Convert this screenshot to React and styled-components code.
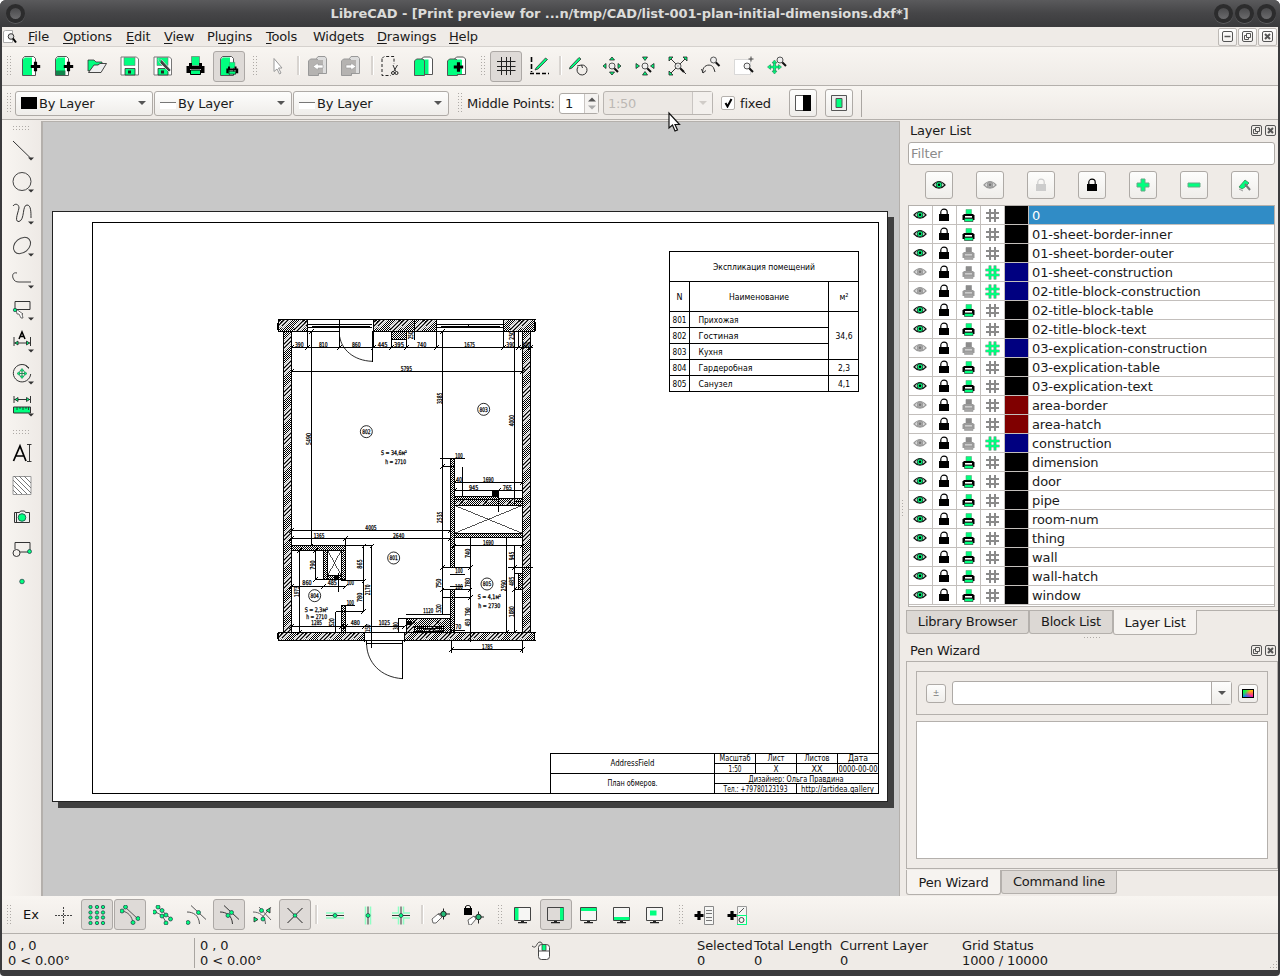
import React from 'react';
import styled, { createGlobalStyle, css } from 'styled-components';

const G = '#00ff7f';
const LINE = '#b4b0ac';

const Global = createGlobalStyle`
  * { box-sizing: border-box; }
  body { margin: 0; background: #fff; font: 13px/15px "DejaVu Sans", sans-serif; color: #1a1a1a; overflow: hidden; }
  svg { display: block; }
`;

/* ---------- window frame ---------- */
const Window = styled.div`
  width: 1280px; height: 976px; display: flex; flex-direction: column; position: relative;
  background: #3b3b3d; border-radius: 6px 6px 4px 4px; overflow: hidden;
`;
const TitleBar = styled.header`
  height: 27px; flex: none; display: flex; align-items: center; padding: 0 2px 0 6px;
  background: linear-gradient(#5a5a5c, #454547 50%, #3a3a3c); color: #dcdcda;
  font-weight: bold; font-size: 13px;
`;
const TitleText = styled.div`
  flex: 1; text-align: center; padding-left: 0; margin-left: -2px; white-space: nowrap; letter-spacing: -0.08px;
`;
const Orb = styled.i`
  width: 19px; height: 19px; margin-right: 2.500px; border-radius: 50%; border: 4px solid #2c2c2d;
  background: linear-gradient(#4a4a4c, #6b6b6d); box-shadow: 0 1px 0 #5d5d5f;
`;
const Client = styled.div`
  flex: none; height: 943px; margin: 0 2px; display: flex; flex-direction: column; background: #efebe7;
`;
const MenuBar = styled.nav`
  height: 20px; flex: none; display: flex; align-items: center; border-bottom: 1px solid #d5d1cd; padding-left: 1px;
`;
const MenuItem = styled.span`
  width: ${p => p.$w}px; letter-spacing: -0.2px; white-space: nowrap;
  u { text-underline-offset: 2px; text-decoration-thickness: 1px; }
`;
const MdiIcon = styled.span` width: 25px; `;
const MdiButtons = styled.div` margin-left: auto; display: flex; gap: 1px; padding-right: 1px; `;
const MdiButton = styled.button`
  width: 19px; height: 18px; padding: 0; border: 1px solid #bdb9b5; border-radius: 2px;
  background: linear-gradient(#fff, #f0edea); display: grid; place-items: center;
`;

/* ---------- toolbars ---------- */
const ToolBar = styled.div`
  height: ${p => p.$h}px; flex: none; display: flex; align-items: center; padding-top: ${p => p.$pt || 0}px;
  background: linear-gradient(#f8f5f1, #eeeae6); border-bottom: 1px solid ${LINE}; overflow: hidden;
`;
const dots = css`
  background-image: radial-gradient(circle at 0.5px 0.5px, #aeaaa6 0.6px, transparent 0.9px);
  background-size: 3px 3px;
`;
const Handle = styled.i`
  flex: none; width: ${p => p.$w || 15}px; height: 20px; padding-left: 7px; margin-left: ${p => (p.$first ? -2 : 0)}px;
  &::before { content: ""; display: block; width: 5px; height: 20px; ${dots} }
`;
const Sep = styled.i`
  flex: none; width: ${p => p.$w || 7}px; height: 20px; padding-left: 3px;
  &::before { content: ""; display: block; width: 2px; height: 19px; background: #d8d4d0; border-right: 1px solid #fff; }
`;
const ToolButton = styled.button`
  flex: none; width: 32px; height: 31px; margin: 0 1px 0 0; padding: 0; display: grid; place-items: center;
  border: 1px solid ${p => (p.$on ? '#aca8a5' : 'transparent')}; border-radius: 3px;
  background: ${p => (p.$on ? '#dedad7' : 'none')}; font: inherit; color: #111;
`;
const Combo = styled.div`
  width: ${p => p.$w}px; height: 25px; flex: none; margin-right: ${p => p.$mr ?? 1}px; display: flex; align-items: center;
  border: 1px solid #aeaaa6; border-radius: 3px; padding: 0 6px 0 5px; gap: 2px; letter-spacing: -0.2px;
  background: linear-gradient(#fdfdfc, #efedea);
`;
const Swatch = styled.i` width: 16px; height: 12px; background: #000; `;
const LineSample = styled.i`
  width: 16px; height: 12px; background: linear-gradient(#fff0 5px, #777 5px, #777 6px, #fff 6px);
`;
const Caret = styled.i`
  margin-left: auto; border: 4px solid transparent; border-top-color: ${p => p.$c || '#555'}; border-bottom: 0;
`;
const Label = styled.span` white-space: nowrap; letter-spacing: -0.2px; width: ${p => p.$w}px; flex: none; `;
const Spin = styled.div`
  width: 40px; height: 21px; flex: none; border: 1px solid #aeaaa6; border-radius: 3px; background: #fff; display: flex;
  align-items: center; padding-left: 5px; margin-right: 4px;
`;
const SpinArrows = styled.div`
  margin-left: auto; width: 14px; height: 19px; background: #f5f3f1; border-left: 1px solid #c9c5c2;
  display: grid; place-items: center;
`;
const ScaleBox = styled.div`
  width: 110px; height: 24px; flex: none; border: 1px solid #b9b5b1; border-radius: 3px; display: flex; align-items: center;
  color: #bcb8b4; padding: 0 0 0 4px; margin-right: 8px; background: #ece8e4; letter-spacing: -0.3px;
`;
const ScaleDrop = styled.div`
  margin-left: auto; width: 20px; height: 22px; border-left: 1px solid #c9c5c2; display: flex; align-items: center;
  justify-content: center; background: #f3f0ed;
  i { margin: 0; }
`;
const Check = styled.span`
  width: 14px; height: 14px; flex: none; border: 1px solid #b5b1ad; border-radius: 2px; background: #fff;
  display: grid; place-items: center; margin-right: 5px;
`;
const FramedButton = styled.button`
  width: 28px; height: 28px; flex: none; padding: 0; margin: 0 ${p => p.$mr || 0}px 0 0; border: 1px solid #aeaaa6; border-radius: 3px;
  background: linear-gradient(#fdfdfc, #efedea); display: grid; place-items: center;
`;
const EndRule = styled.i` width: 1px; height: 27px; background: #aaa6a2; `;

/* ---------- middle area ---------- */
const Middle = styled.div` height: 776px; flex: none; display: flex; `;
const SideBar = styled.div`
  width: 39px; display: flex; flex-direction: column; align-items: center;
  background: linear-gradient(90deg, #f8f5f1, #eeeae6);
`;
const SideHandle = styled.i`
  width: 17px; height: ${p => p.$h}px; padding-top: ${p => p.$t}px;
  &::before { content: ""; display: block; height: 5px; ${dots} }
`;
const SideButton = styled.button`
  width: 36px; height: 32px; flex: none; border: 0; padding: 0; background: none; display: grid; place-items: center;
`;
const Canvas = styled.main`
  width: 859px; height: 775px; margin-top: 1px; background: #c8c8c8; border: solid ${LINE}; border-width: 1px 1px 0 2px;
`;
const Splitter = styled.div`
  width: 6px; display: flex; align-items: center; padding-left: 2px;
  &::before { content: ""; width: 2px; height: 17px; ${dots} }
`;
const Dock = styled.aside` width: 372px; display: flex; flex-direction: column; `;
const DockTitle = styled.div`
  height: ${p => p.$h}px; flex: none; display: flex; align-items: center; gap: 3px; padding: ${p => p.$pt || 0}px 2px ${p => p.$pb || 0}px 4px;
  letter-spacing: -0.2px;
  span { flex: 1; }
`;
const Filter = styled.div`
  height: 23px; flex: none; margin: 0 3px 0 2px; border: 1px solid #aeaaa6; border-radius: 3px; background: #fff;
  color: #8b8b8b; padding: 3px 2px; letter-spacing: -0.1px;
`;
const LayerActions = styled.div` display: flex; gap: 23px; padding: 6px 0 6px 19px; height: 40px; flex: none; `;
const LayerTable = styled.div`
  height: 402px; flex: none; margin: 0 3px 0 2px; border: 1px solid ${LINE}; background: #fff;
`;
const LayerRow = styled.div` height: 19px; display: grid; grid-template-columns: 24px 24px 24px 24px 24px 1fr; `;
const Cell = styled.div`
  display: grid; place-items: center; padding-right: ${p => p.$nudge || 0}px;
  border: solid #c3bfbc; border-width: 0 1px 1px 0; background: ${p => p.$bg || '#fff'};
`;
const Name = styled.div`
  border-bottom: 1px solid #c3bfbc; padding: 2px 0 0 3px; background: ${p => (p.$sel ? '#308cc6' : '#fff')};
  color: ${p => (p.$sel ? '#fff' : '#1a1a1a')}; letter-spacing: -0.1px;
`;
const Tabs = styled.div` display: flex; align-items: flex-start; border-top: 1px solid ${LINE}; height: ${p => p.$h}px; flex: none; margin-top: ${p => p.$mt}px; `;
const Tab = styled.div`
  width: ${p => p.$w}px; height: ${p => (p.$on ? 25 : 23)}px; border: 1px solid ${LINE}; border-top: 0; border-radius: 0 0 3px 3px;
  text-align: center; padding-top: ${p => (p.$on ? 5 : 3)}px; background: ${p => (p.$on ? '#f6f3f0' : '#dcd8d4')};
  margin-top: ${p => (p.$on ? -1 : 0)}px; letter-spacing: -0.2px; white-space: nowrap;
`;
const HGrip = styled.i` align-self: center; width: 17px; height: 2px; flex: none; ${dots} `;
const WizardPanel = styled.div`
  height: 208px; flex: none; border: 1px solid ${LINE}; padding: 9px; display: flex; flex-direction: column; gap: 6px;
`;
const WizardTop = styled.div` height: 44px; border: 1px solid ${LINE}; display: flex; align-items: center; padding: 0 9px; gap: 6px; `;
const SmallButton = styled.button`
  width: 20px; height: 19px; padding: 0; border: 1px solid #aeaaa6; border-radius: 3px; background: linear-gradient(#fdfdfc, #efedea);
  display: grid; place-items: center; font: 8px "DejaVu Sans", sans-serif; color: #777;
`;
const ColorCombo = styled.div`
  flex: 1; height: 24px; border: 1px solid #aeaaa6; border-radius: 3px; background: #fff; display: flex; justify-content: flex-end;
  div { width: 20px; border-left: 1px solid #aeaaa6; background: linear-gradient(#fdfdfc, #efedea); display: grid; place-items: center; }
  div i { margin: 0; }
`;
const Spectrum = styled.i`
  width: 12px; height: 9px; border: 1px solid #000;
  background: linear-gradient(135deg, #0f4 15%, transparent 50%), linear-gradient(45deg, #08f 10%, transparent 60%), linear-gradient(#fc0, #f0a);
`;
const WhiteBox = styled.div` flex: 1; border: 1px solid ${LINE}; background: #fff; `;
const Status = styled.footer`
  height: 36px; flex: none; display: flex; padding: 4px 0 0 6px; letter-spacing: -0.1px;
`;
const StatusCell = styled.div`
  width: ${p => p.$w}px; white-space: pre; flex: none; margin-left: ${p => p.$ml || 0}px;
`;
const StatusRule = styled.i` width: 1px; height: 30px; background: #a9a5a1; margin-right: 5px; `;
const Grip = styled.i`
  margin: 20px 0 0 auto; width: 11px; height: 11px; ${dots} clip-path: polygon(100% 0, 100% 100%, 0 100%);
`;
const Pointer = styled.svg` position: absolute; left: 667px; top: 111px; `;

/* ---------- icons ---------- */
const Dot = ({ x, y, r = 1.7 }) => <circle cx={x} cy={y} r={r} fill={G} stroke="#234" strokeWidth=".7" />;
const Lens = ({ x, y }) => (
  <g transform={`translate(${x} ${y})`}>
    <path d="M2.200 2.200L6 6" stroke="#111" strokeWidth="2" /><circle r="3" fill="#eee" fillOpacity=".8" stroke="#444" strokeWidth=".9" />
  </g>
);
const Plus = ({ x, y, s = 4.7 }) => <path d={`M${x - s} ${y}h${2 * s}M${x} ${y - s}v${2 * s}`} stroke="#000" strokeWidth="3.200" />;
const Printer = () => (
  <>
    <path d="M5.500 .5h8v9h-8z" fill={G} stroke="#666" strokeWidth=".6" />
    <path d="M3 7h3v3h7V7h3v3h2.500v7H15v-4H4v4H.500v-7H3z" fill="#000" />
    <path d="M4.500 14h10v4.500h-10z" fill={G} stroke="#000" />
  </>
);
const Floppy = () => (
  <>
    <path d="M1 1h15.500L18.500 3v16H1z" fill="#fff" stroke="#777" /><path d="M4 1.500h11v8H4z" fill={G} stroke="#777" strokeWidth=".6" />
    <path d="M5 12.500h10V19H5z" fill={G} stroke="#333" strokeWidth=".8" /><path d="M8 14.500h3v3H8z" fill="#222" />
  </>
);
const Docs = () => (
  <>
    <path d="M7.500 3l2-2h7l2 2v15.500h-11z" fill="#fff" stroke="#555" /><path d="M9 3.500h5.500V18H9z" fill={G} />
    <path d="M.500 5l2-2h6.500l1.500 2v14.500H.500z" fill={G} stroke="#555" />
  </>
);
const Monitor = ({ children }) => (
  <>
    <path d="M1.500 2.500h16v13h-16z" fill="#f6f6f4" stroke="#444" />{children}
    <path d="M8 16h3v2H8zM5 17h9v1.200H5z" fill="#222" />
  </>
);
const Doc = () => (
  <>
    <path d="M1.500 3L3.500 .5h9l2 2v17h-13z" fill="#fff" stroke="#555" /><path d="M2 3.500L4 1.500h7V19H2z" fill={G} />
  </>
);
const Pencil = () => <path d="M7 12l9.500-10L18.500 3.500 9 13l-3 1z" fill={G} stroke="#333" strokeWidth=".8" />;
const Tri = ({ d }) => <path d={d} fill={G} stroke="#222" strokeWidth=".8" />;
const Cross4 = ({ x, y, s = 6 }) => (
  <g transform={`translate(${x} ${y})`}>
    <path d={`M${-s} 0H${s}M0 ${-s}V${s}`} stroke="#285" strokeWidth="2.600" /><path d={`M${-s} 0H${s}M0 ${-s}V${s}`} stroke={G} strokeWidth="1.400" />
    <path d={`M${-s - 2} 0l3-2.500v5zM${s + 2} 0l-3-2.500v5zM0 ${-s - 2}l-2.500 3h5zM0 ${s + 2}l-2.500-3h5z`} fill={G} stroke="#285" strokeWidth=".6" />
  </g>
);
const Sheets = ({ back }) => (
  <g stroke="#999">
    <path d="M8.500 2.500l1.500-2h7l1.500 2v15h-10z" fill="#ddd" /><path d="M.500 5l2-2h6.500l1.500 2v14.500H.500z" fill="#b5b3b1" /><path d="M8 4h7v13H8z" fill="#b5b3b1" stroke="none" />
    <path d={back ? 'M5 10.500l5-3.500v2h5v3h-5v2z' : 'M15 10.500L10 7v2H5v3h5v2z'} fill="#fff" stroke="#999" strokeWidth=".6" />
  </g>
);
const curves = 'M5 .5l15 14M1 7c6 0 12 3 12.500 12';
const icons = {
  new: <><Doc /><Plus x={14.500} y={10.500} /></>,
  newTpl: <><Doc /><path d="M2 14.500h9.500V19H2z" fill="#175c3a" opacity=".75" /><Plus x={14.500} y={10.500} /></>,
  open: <><path d="M1 15V4h6l2 2h6v4z" fill={G} stroke="#333" strokeWidth=".8" /><path d="M1.500 16.500L7 9h4l2-1.500h6.500L14 16.500z" fill="#eee" stroke="#333" strokeWidth=".9" /></>,
  save: <Floppy />,
  saveAs: <><Floppy /><path d="M5 3l4 1 9 10-2 2L7 7z" fill="#444" stroke="#eee" strokeWidth=".7" /><path d="M5 3l3 .5L7.500 7z" fill={G} /></>,
  print: <Printer />,
  preview: <><Doc /><g transform="translate(7 6) scale(.66)"><Printer /></g></>,
  cursor: <path d="M7 2.500v13l3-2.500 2.500 5 1.500-1-2.500-5H15z" fill="#fff" stroke="#999" />,
  undo: <Sheets back />, redo: <Sheets />,
  cut: <><path d="M1 2.500L3 .5h10V8M1 3v16.500h9" fill="none" stroke="#222" strokeDasharray="3 2" /><path d="M12 9l2.500 6M16.500 9l-3.500 6" stroke="#333" fill="none" /><circle cx="12" cy="17" r="1.500" fill="none" stroke="#222" /><circle cx="15.500" cy="17" r="1.500" fill="none" stroke="#222" /></>,
  copy: <Docs />,
  paste: <><Docs /><path d="M8 4h7v14H8z" fill={G} /><Plus x={11.500} y={11} /></>,
  grid: <path d="M5.500 1v18M10.500 1v18M14.500 1v18M1 5.500h18.500M1 10.500h18.500M1 14.500h18.500" stroke="#222" />,
  draft: <><path d="M2.500 1v15" stroke="#000" strokeWidth="1.600" strokeDasharray="5 2" /><path d="M1 17.500h19" stroke="#000" strokeWidth="1.500" strokeDasharray="4 2" /><Pencil /></>,
  redraw: <><path d="M1 11L10 1.500l2 1.500-9 9-2.500 1z" fill={G} stroke="#333" strokeWidth=".8" /><path d="M9 11a5 5 0 1 0 3.500-2L8 10m4.500-1l1 3" fill="none" stroke="#333" /></>,
  zoomIn: <><Tri d="M10 1l2.500 3h-5zM10 19l2.500-3h-5zM1 10l3-2.500v5zM19 10l-3-2.500v5z" /><Lens x={10} y={10} /></>,
  zoomOut: <><Tri d="M10 4.500L7.500 1h5zM10 15.500l2.500 3.500h-5zM4.500 10L1 7.500v5zM15.500 10l3.500-2.500v5z" /><Lens x={10} y={10} /></>,
  zoomAuto: <><path d="M2 2l16 16M18 2L2 18" stroke="#333" /><Tri d="M1 1h4L1 5zM19 1v4l-4-4zM1 19v-4l4 4z" /><Lens x={10} y={10} /></>,
  zoomPrev: <><path d="M2 17C0 9 11 6 13 13l1 3M2 17l-1.500-4M2 17l3-2.500" fill="none" stroke="#333" /><Lens x={12.500} y={4} /></>,
  zoomWin: <><path d="M.500 3.500h16v15H.500z" fill="#fff" stroke="#ccc" strokeWidth=".7" /><path d="M14.500 3h5M17 .5v5" stroke="#444" /><Lens x={13} y={10} /></>,
  zoomPan: <><Cross4 x={7.500} y={11} s={5} /><Lens x={13} y={4} /></>,
  line: <path d="M1 2l17.500 17" stroke="#333" />,
  circle: <circle cx="10" cy="10.500" r="9" fill="none" stroke="#444" />,
  spline: <path d="M1 3c2-3 6-2 6 2-1 5-5 14 0 13.500C13 17 10 2 15 2c4 0 4 7 4 13" fill="none" stroke="#333" />,
  ellipse: <ellipse cx="10" cy="10.500" rx="9.500" ry="7" transform="rotate(-40 10 10.500)" fill="none" stroke="#444" />,
  polyline: <path d="M5 6C1 5 0 8 1 11s3 4 6 4h12" fill="none" stroke="#444" />,
  select: <><path d="M3 2.500h15v8H3z" fill="none" stroke="#333" /><path d="M4 10l1 5 2 0 2 4 2 0-1-4h1z" fill="#fff" stroke="#333" strokeWidth=".7" /><Dot x={3} y={11} /></>,
  dim: <><path d="M2 6v9M18.500 6v9M2 12h16" stroke="#333" fill="none" /><path d="M7 8L10 1l3 7M8 5.500h4" fill="none" stroke="#000" strokeWidth="1.500" /><Tri d="M3 12l3-2v4zM17.500 12l-3-2v4z" /></>,
  modify: <><path d="M17 5A8.700 8.700 0 1 0 18.700 11M13.500 2.500l3.500 3" fill="none" stroke="#333" /><path d="M6 10.500h8M10 6.500v8" stroke="#285" strokeWidth="1" /><path d="M5 10.500l2.500-2v4zM15 10.500l-2.500-2v4zM10 5.500l-2 2.500h4zM10 15.500l-2-2.500h4z" fill={G} stroke="#285" strokeWidth=".7" /></>,
  measure: <><path d="M2 1v7M18.500 1v7M2 4.500h16" stroke="#333" /><Tri d="M3 4.500l3-2v4zM17.500 4.500l-3-2v4z" /><path d="M1.500 12h17v6h-17z" fill={G} stroke="#333" /><path d="M5 12v3M8 12v2M11 12v3M14 12v2M16.500 12v3" stroke="#222" strokeWidth=".8" /></>,
  text: <><path d="M1.500 18L8 3l6 15M3.500 13h8.500" fill="none" stroke="#000" strokeWidth="1.700" /><path d="M15 1.500h4.500M17.500 1.500v17M15 18.500h4.500" stroke="#222" strokeWidth=".9" /></>,
  hatch: <><path d="M1 1.500h18v18H1z" fill="#fff" stroke="#999" /><path d="M1 15l4 4M1 10l9 9M1 5l14 14M2 1l17 17M7 1l12 12M12 1l7 7" stroke="#777" /></>,
  camera: <><path d="M2.500 5.500h5l1-1.500h4l1 1.500h4v10h-15zM4.500 6v10" fill="#eee" stroke="#333" /><circle cx="10" cy="10.500" r="3.800" fill={G} stroke="#265" /></>,
  block: <><path d="M3 10V3.500h15V13H8" fill="none" stroke="#333" /><circle cx="4.500" cy="14" r="3.500" fill="none" stroke="#333" /><Dot x={17.500} y={12.500} r={2} /></>,
  point: <Dot x={10} y={10.500} r={2.300} />,
  free: <path d="M1 10.500h17M9.500 2v17" stroke="#444" strokeDasharray="2 1" />,
  snapGrid: [3.500, 10, 16].flatMap(x => [2, 7.500, 12.500, 18].map(y => <Dot key={x + '-' + y} x={x} y={y} />)),
  snapEnd: <><path d="M5 2l13 12M2 6c6 1 10 5 11 12" fill="none" stroke="#555" /><Dot x={5.500} y={2} r={2} /><Dot x={2} y={6} r={2} /><Dot x={18} y={13.500} r={2} /><Dot x={13} y={17.500} r={2} /></>,
  snapOn: <><path d="M5 2l13 12M1 7c6 1 10 5 12 11" fill="none" stroke="#555" />{[[5, 2], [1.500, 7], [9, 5.500], [9, 11], [13, 10], [17.500, 14], [13, 18]].map(([a, b]) => <Dot key={a + '-' + b} x={a} y={b} r={2} />)}</>,
  snapCenter: <><path d={curves} fill="none" stroke="#555" /><Dot x={12.500} y={7.500} r={2} /><Dot x={2} y={17.500} r={2} /></>,
  snapMid: <><path d={curves} fill="none" stroke="#333" /><Dot x={12.500} y={7.500} r={2} /><Dot x={9} y={10.500} r={2} /></>,
  snapDist: <><path d="M7 2l12 13M1 7c6 0 12 3 12.500 12M19 2L9 14" fill="none" stroke="#666" /><Dot x={9.500} y={5.500} r={2} /><Dot x={11} y={14} r={2} /><Tri d="M14 5.500l4-2.500v5zM2 12l4 2.500-4 2.500z" /></>,
  snapInt: <><path d="M2.500 3l15 15M17.500 3l-15 15" stroke="#222" /><Dot x={10} y={10.500} r={1.800} /></>,
  resH: <><path d="M1 8h18M1 13h18" stroke="#8fffc4" strokeWidth="1.500" /><path d="M1 10.500h18" stroke="#333" /><Dot x={10} y={10.500} r={2} /></>,
  resV: <><path d="M7.500 1.500v18M12.500 1.500v18" stroke="#8fffc4" strokeWidth="1.500" /><path d="M10 1.500v18" stroke="#333" /><Dot x={10} y={10.500} r={2} /></>,
  resO: <><path d="M1 8h6.500V1.500M12.500 1.500V8H19M1 13h6.500v6.500M12.500 19.500V13H19" stroke="#8fffc4" strokeWidth="1.500" fill="none" /><path d="M1 10.500h18M10 1.500v18" stroke="#333" /><Dot x={10} y={10.500} r={2} /></>,
  relZero: <><path d="M7 9h12M12.500 3.500v11" stroke="#222" /><circle cx="12.500" cy="9" r="2.700" fill="#2b7" stroke="#222" /><path d="M1 14l6-5 4 3-6 6H2z" fill="#fff" stroke="#444" strokeWidth=".8" /></>,
  lockZero: <><path d="M0 3h8v7H0z" fill="#000" /><path d="M1.500 3V1.500q2.500-3 5 0V3" fill="none" stroke="#000" /><path d="M9 12h11M14.500 6.500v12" stroke="#222" /><circle cx="14.500" cy="12" r="2.700" fill="#2b7" stroke="#222" /><path d="M4 15l6-4 2 3-5 6H5z" fill="#fff" stroke="#444" strokeWidth=".8" /></>,
  dockL: <Monitor><path d="M2 3h3.500v12H2z" fill={G} /></Monitor>,
  dockR: <Monitor><path d="M2 3h12v12H2z" fill="#dedad7" /><path d="M14 3h3.500v12H14z" fill={G} /></Monitor>,
  dockT: <Monitor><path d="M2 3h15.500v3H2z" fill={G} /></Monitor>,
  dockB: <Monitor><path d="M2 12h15.500v3H2z" fill={G} /></Monitor>,
  dockF: <Monitor><path d="M5 5.500h6.500v5H5z" fill={G} /></Monitor>,
  addCmd: <><path d="M10.500 1.500h9v18h-9z" fill="#f6f6f4" stroke="#888" /><path d="M12 5.500h6M12 8.500h6M12 12.500h6M12 15.500h6" stroke="#555" strokeWidth=".8" /><Plus x={5} y={10.500} s={4.500} /></>,
  addTool: <><path d="M10.500 1.500h9v18h-9z" fill="#f6f6f4" stroke="#999" /><path d="M10 10.500h9.500v9H10" fill="none" stroke={G} /><path d="M12 8l5-5" stroke="#555" /><circle cx="14.500" cy="15" r="2.500" fill="none" stroke="#444" /><Plus x={5} y={10.500} s={4.500} /></>,
};
const Icon = ({ n }) => <svg width="20" height="20" viewBox="0 0 20 20">{icons[n]}</svg>;

const Eye = ({ on }) => (
  <svg width="14" height="10" viewBox="0 0 14 10">
    <path d="M1 5Q7-2 13 5 7 11.500 1 5z" fill={on ? '#eafff3' : '#eee'} stroke={on ? '#111' : '#999'} strokeWidth="1.200" />
    <circle cx="7" cy="4.800" r="2.900" fill={on ? G : '#aaa'} stroke={on ? '#153' : '#999'} /><circle cx="7" cy="4.800" r="1.300" fill={on ? '#000' : '#777'} />
  </svg>
);
const Lock = ({ c = '#000' }) => (
  <svg width="12" height="14" viewBox="0 0 12 14"><path d="M1 6h10v7H1z" fill={c} /><path d="M2.800 6.500V4.200a3.200 3 0 0 1 6.400 0v2.300" fill="none" stroke={c} strokeWidth="1.200" /></svg>
);
const SmallPrinter = ({ on }) => (
  <svg width="13" height="13" viewBox="0 0 13 13">
    <path d="M4 .5h5.500V5H4z" fill={on ? G : '#8c8c8c'} stroke={on ? '#5a7' : '#8c8c8c'} strokeWidth=".6" />
    <path d="M2 5h9l1.500 1.500V11H.500V6.500z" fill={on ? '#000' : '#9a9a9a'} />
    <path d="M3 7h7v1.600H3z" fill={on ? '#fff' : '#ccc'} /><path d="M2.500 9.500h8.500v3H2.500z" fill={on ? G : '#a5a5a5'} stroke={on ? '#222' : '#999'} strokeWidth=".6" />
  </svg>
);
const Hash = ({ on }) => (
  <svg width="15" height="15" viewBox="0 0 15 15">
    {on && <path d="M5 .5v14M10 .5v14M.500 5h14M.500 10h14" stroke="#3a7d5a" strokeWidth="2.700" />}
    <path d="M5 1v13M10 1v13M1 5h13M1 10h13" stroke={on ? G : '#8a8a8a'} strokeWidth={on ? 1.800 : 2} />
  </svg>
);
const Framed = ({ children }) => (
  <svg width="11" height="11" viewBox="0 0 11 11" fill="none" stroke="#555"><rect x=".5" y=".5" width="10" height="10" rx="1.500" />{children}</svg>
);
const Restore = () => <Framed><path d="M4.500 2.500h4v4h-4zM4.500 4.500h-2v4h4v-2" /></Framed>;
const Close = () => <Framed><path d="M3 3l5 5M8 3L3 8" strokeWidth="2" /></Framed>;
const Minimize = () => <Framed><path d="M2.500 5.500h6" strokeWidth="1.500" /></Framed>;

/* ---------- drawing sheet ---------- */
const CadText = styled.text`
  font-family: "DejaVu Sans Condensed", "DejaVu Sans", sans-serif; font-stretch: condensed; fill: #000;
`;
const T = ({ x, y, w, s = 9, children, start }) => (
  <CadText x={x} y={y} fontSize={s} textLength={w} lengthAdjust="spacingAndGlyphs" textAnchor={start ? 'start' : 'middle'}>{children}</CadText>
);
const dims = [
  [88, 110, '390', 26], [160, 110, '810', 26], [259, 110, '860', 26], [338, 110, '445', 30], [387, 110, '395', 30], [455, 110, '740', 28],
  [599, 110, '1675', 32], [722, 110, '390', 26], [768, 110, '100', 24], [409, 182, '5795', 34], [655, 515, '1690', 32], [611, 539, '945', 28],
  [712, 539, '765', 28], [567, 445, '100', 22], [567, 517, '40', 18],
  [303, 660, '4005', 34], [147, 683, '1365', 32], [386, 683, '2640', 34], [655, 706, '1690', 32], [111, 826, '860', 28], [187, 826, '485', 28],
  [241, 826, '100', 22], [241, 885, '100', 22], [140, 946, '1285', 32], [256, 946, '480', 28], [343, 946, '1025', 34], [475, 909, '1120', 30],
  [652, 1018, '1785', 32], [567, 790, '100', 22], [567, 837, '100', 22], [565, 958, '70', 18],
];
const vdims = [
  [122, 387, '5490', 36], [515, 265, '3385', 34], [731, 332, '4000', 34], [515, 622, '2535', 34], [135, 765, '790', 28], [87, 845, '1973', 32],
  [277, 762, '865', 28], [276, 862, '780', 28], [300, 840, '2170', 32], [600, 730, '740', 28], [514, 820, '750', 28], [600, 818, '780', 28],
  [708, 827, '2590', 34], [731, 738, '945', 26], [731, 814, '485', 28], [731, 905, '1080', 32], [599, 905, '790', 26], [600, 938, '450', 22],
  [191, 937, '520', 24], [384, 948, '300', 22], [300, 955, '150', 22], [514, 895, '520', 26], [430, 76, '250', 24], [731, 76, '250', 26],
];
const ticks = [
  [64, 112], [112, 112], [209, 112], [310, 112], [365, 112], [410, 112], [500, 112], [700, 112], [745, 112], [757, 112], [781, 112],
  [64, 184], [757, 184], [124, 64], [517, 64], [553, 517], [757, 517], [553, 541], [685, 541], [64, 661], [541, 661], [64, 685], [226, 685], [541, 685],
  [517, 470], [553, 708], [757, 708], [124, 708], [88, 721], [137, 721], [137, 808], [281, 708], [281, 813], [281, 905], [305, 708], [226, 829], [64, 829], [160, 829],
  [64, 949], [214, 949], [283, 949], [403, 949], [544, 1018], [757, 1018], [517, 772], [517, 840], [601, 772], [601, 840], [601, 862], [709, 967], [733, 772], [733, 838], [733, 967], [88, 967], [226, 949],
];
const walls = [
  [27, 28, 86, 36], [310, 28, 190, 36], [700, 28, 95, 36], [40, 64, 24, 903], [757, 64, 24, 903], [27, 967, 256, 24], [403, 967, 392, 24],
  [553, 565, 204, 21], [409, 925, 132, 42],
];
const partitions = [
  [365, 64, 45, 24], [541, 445, 12, 327], [541, 840, 12, 127], [553, 561, 132, 9], [553, 670, 204, 12], [667, 541, 18, 20],
  [64, 708, 162, 13], [160, 721, 13, 87], [214, 721, 12, 92], [173, 797, 41, 11], [214, 888, 12, 79], [745, 790, 12, 48],
];
const rooms = [[289, 365, '802'], [641, 298, '803'], [371, 744, '801'], [134, 857, '804'], [651, 822, '805']];

const FloorPlan = () => (
  <g transform="translate(270 310) scale(.333333)" stroke="#000" strokeWidth="3" fill="none">
    <g shapeRendering="crispEdges">
      {walls.map(([x, y, w, h]) => <rect key={`${x}-${y}-${w}`} x={x} y={y} width={w} height={h} fill="url(#masonry)" />)}
      {partitions.map(([x, y, w, h]) => <rect key={`${x}-${y}-${w}`} x={x} y={y} width={w} height={h} fill="url(#stipple)" />)}
      <path d="M27 28H797M22 40V60M797 36V64M113 28V64M113 45H307M113 54H307M125 49H300M209 28V112M310 28V112M500 28V112M500 45H700M500 54H700M512 49H690M595 45V54M700 28V112M64 64H209M410 64H755M64 64V112M112 64V112M307 64V155M365 64V112M410 64V112M433 28V90M745 64V112M64 112H790M64 184H757" />
      <path d="M124 64V708M517 64V915M733 64V586M510 445H585M517 470H553M577 470V561M553 517H757M553 541H757M685 541V605M667 541V561M733 574H757" />
      <path d="M64 661H541M64 685H541M226 685V721M88 721V967M137 721V808M137 808H226M64 829H226M281 708V905M305 708V1015M226 708H305M214 813H281M205 790V845M214 888H255M197 905H281M197 905V967M64 949H403M173 721H214V797H173z" />
      <path d="M409 913H541M385 925H409V967H385zM433 949H522V965H433zM440 957H515M553 586H757V670H553zM553 708H757M601 682V996M709 682V967M733 708V967M715 772H790M733 790H757M733 772V790M733 838H757M745 790V838M517 772H601M541 793H585M517 840H601M541 829H580M517 862H601M541 961H585" />
      <path d="M280 991H409M283 967V996M403 967V996M290 1002H398M290 991V1005M398 991V1106M544 991V1028M757 991V1028M544 1018H757M27 967H797M27 991H797M22 970V988" />
      <path d="M553 586L757 670M757 586L553 670M173 721L214 797M214 721L173 797M434 950L521 964M434 964L521 950" strokeWidth="2" />
      {ticks.map(([x, y]) => <path key={`${x}-${y}`} d={`M${x - 7} ${y + 7}L${x + 7} ${y - 7}`} />)}
      <rect x="670" y="545" width="12" height="14" fill="#000" /><rect x="412" y="934" width="12" height="10" fill="#000" /><rect x="195" y="796" width="12" height="10" fill="#000" />
    </g>
    <path d="M209 80C215 118 250 152 307 154M290 1005C292 1055 330 1102 398 1106" strokeWidth="2.500" />
    {rooms.map(([x, y, n]) => (
      <g key={n}><circle cx={x} cy={y} r="18" strokeWidth="2.500" /><g strokeWidth=".8"><T x={x} y={y + 7} w={25} s={19}>{n}</T></g></g>
    ))}
    <g strokeWidth=".8">
      {dims.map(([x, y, t, w]) => <T key={`${x}-${y}`} x={x} y={y} w={w} s={20}>{t}</T>)}
      {vdims.map(([x, y, t, w]) => <g key={`${x}-${y}`} transform={`translate(${x} ${y}) rotate(-90)`}><T x={0} y={0} w={w} s={20}>{t}</T></g>)}
      <T x={372} y={434} w={78} s={19}>S = 34,6м²</T><T x={377} y={461} w={62} s={19}>h = 2710</T>
      <T x={139} y={907} w={70} s={19}>S = 2,3м²</T><T x={140} y={926} w={62} s={19}>h = 2710</T>
      <T x={658} y={868} w={70} s={19}>S = 4,1м²</T><T x={658} y={894} w={66} s={19}>h = 2730</T>
    </g>
  </g>
);
const Sheet = () => (
  <svg width="856" height="774" viewBox="43 122 856 774">
    <defs>
      <pattern id="stipple" width="6" height="6" patternUnits="userSpaceOnUse">
        <path d="M0 0h6v6H0z" fill="#fff" stroke="none" /><path d="M0 0h3v3H0zM3 3h3v3H3z" fill="#000" stroke="none" />
      </pattern>
      <pattern id="masonry" width="72" height="72" patternUnits="userSpaceOnUse">
        <rect width="72" height="72" fill="url(#stipple)" stroke="none" />
        <path d="M36 30L66 0M36 42L72 6M36 54L72 18M0 66L30 36M0 78L36 42M0 54L24 30" stroke="#fff" strokeWidth="5" />
        <path d="M36 36L72 0M36 48L72 12M0 72L36 36M0 60L30 30" stroke="#000" strokeWidth="3" />
      </pattern>
    </defs>
    <g shapeRendering="crispEdges">
      <path d="M58 217h836v591H58z" fill="#404040" />
      <path d="M52.500 211.500h835v590h-835z" fill="#fff" stroke="#222" />
      <path d="M92.500 222.500h786v571h-786z" fill="none" stroke="#000" />
      <path d="M669.500 251.500h189v140h-189zM669.500 281.500h189M669.500 311.500h189M669.500 327.500h159M669.500 343.500h159M669.500 359.500h189M669.500 375.500h189M689.500 281.500v110M828.500 281.500v110" fill="none" stroke="#000" />
      <path d="M550.500 793.500v-40h328M550.500 773.500h328M714.500 763.500h164M714.500 783.500h164M714.500 753.500v40M755.500 753.500v20M796.500 753.500v20M837.500 753.500v20M796.500 783.500v10" fill="none" stroke="#000" />
    </g>
    <FloorPlan />
    <T x={764} y={270} w={102}>Экспликация помещений</T>
    <T x={679.500} y={300} w={6}>N</T><T x={759} y={300} w={60}>Наименование</T><T x={844} y={300} w={9}>м²</T>
    {[['801', 'Прихожая', 40], ['802', 'Гостиная', 40], ['803', 'Кухня', 24], ['804', 'Гардеробная', 54], ['805', 'Санузел', 34]].map(([n, t, w], i) => (
      <g key={n}><T x={679.500} y={323 + i * 16} w={14}>{n}</T><T start x={698.500} y={323 + i * 16} w={w}>{t}</T></g>
    ))}
    <T x={844} y={339} w={17}>34,6</T><T x={844} y={371} w={12}>2,3</T><T x={844} y={387} w={12}>4,1</T>
    <T x={632.500} y={766} w={44} s={8.500}>AddressField</T><T x={632.500} y={786} w={50} s={8.500}>План обмеров.</T>
    <T x={735} y={761} w={31} s={8}>Масштаб</T><T x={776} y={761} w={17} s={8}>Лист</T><T x={817} y={761} w={25} s={8}>Листов</T><T x={858} y={761} w={20} s={8}>Дата</T>
    <T x={735} y={771.500} w={13} s={8}>1:50</T><T x={776} y={771.500} w={5} s={8}>X</T><T x={817} y={771.500} w={11} s={8}>XX</T><T x={858} y={771.500} w={39} s={8}>0000-00-00</T>
    <T x={796} y={781.500} w={95} s={8}>Дизайнер: Ольга Правдина</T>
    <T x={755.500} y={791.500} w={64} s={8}>Тел.: +79780123193</T><T x={837.500} y={791.500} w={73} s={8}>http://artidea.gallery</T>
  </svg>
);

/* ---------- data ---------- */
const menus = [['', 'F', 'ile', 35], ['', 'O', 'ptions', 63], ['', 'E', 'dit', 38], ['', 'V', 'iew', 43], ['Pl', 'u', 'gins', 59], ['', 'T', 'ools', 47], ['Widgets', '', '', 64], ['', 'D', 'rawings', 72], ['', 'H', 'elp', 40]];
const N = '#000', B = '#000080', R = '#800000';
const layers = [
  ['0', 1, 1, 0, N], ['01-sheet-border-inner', 1, 1, 0, N], ['01-sheet-border-outer', 1, 0, 0, N], ['01-sheet-construction', 0, 0, 1, B],
  ['02-title-block-construction', 0, 0, 1, B], ['02-title-block-table', 1, 1, 0, N], ['02-title-block-text', 1, 1, 0, N],
  ['03-explication-construction', 0, 0, 1, B], ['03-explication-table', 1, 1, 0, N], ['03-explication-text', 1, 1, 0, N],
  ['area-border', 0, 0, 0, R], ['area-hatch', 0, 0, 0, R], ['construction', 0, 0, 1, B],
  ...['dimension', 'door', 'pipe', 'room-num', 'thing', 'wall', 'wall-hatch', 'window'].map(n => [n, 1, 1, 0, N]),
];
const Tools = ({ list, on = [] }) => list.map(n => <ToolButton key={n} $on={on.includes(n)}>{n === 'Ex' ? 'Ex' : <Icon n={n} />}</ToolButton>);
const SideTools = ({ list, menu }) => list.map(n => (
  <SideButton key={n}>
    <svg width="24" height="24" viewBox="0 0 24 24"><g transform="translate(2 2)">{icons[n]}</g>{menu && <path d="M18 20.500h6l-3 3z" fill="#333" />}</svg>
  </SideButton>
));

export default function App() {
  return (
    <Window>
      <Global />
      <TitleBar>
        <Orb />
        <TitleText>LibreCAD - [Print preview for ...n/tmp/CAD/list-001-plan-initial-dimensions.dxf*]</TitleText>
        <Orb /><Orb /><Orb />
      </TitleBar>
      <Client>
        <MenuBar>
          <MdiIcon>
            <svg width="15" height="14" viewBox="0 0 15 14"><path d="M.5 1.500l2-1h7v12h-9z" fill="#fff" stroke="#aaa" /><circle cx="8" cy="6.500" r="2.800" fill="#ddd" stroke="#333" /><path d="M10 8.500l3 4" stroke="#000" strokeWidth="2" /></svg>
          </MdiIcon>
          {menus.map(([a, u, b, w]) => <MenuItem key={a + u + b} $w={w}>{a}<u>{u}</u>{b}</MenuItem>)}
          <MdiButtons><MdiButton><Minimize /></MdiButton><MdiButton><Restore /></MdiButton><MdiButton><Close /></MdiButton></MdiButtons>
        </MenuBar>
        <ToolBar $h={39}>
          <Handle $first />
          <Tools list={['new', 'newTpl', 'open', 'save', 'saveAs', 'print', 'preview']} on={['preview']} />
          <Handle /><Tools list={['cursor']} /><Sep $w={8} /><Tools list={['undo', 'redo']} /><Sep /><Tools list={['cut', 'copy', 'paste']} />
          <Handle $w={16} /><Tools list={['grid', 'draft']} on={['grid']} /><Sep />
          <Tools list={['redraw', 'zoomIn', 'zoomOut', 'zoomAuto', 'zoomPrev', 'zoomWin', 'zoomPan']} />
        </ToolBar>
        <ToolBar $h={34} $pt={1}>
          <Handle $first />
          <Combo $w={138}><Swatch />By Layer<Caret /></Combo>
          <Combo $w={138}><LineSample />By Layer<Caret /></Combo>
          <Combo $w={156} $mr={2}><LineSample />By Layer<Caret /></Combo>
          <Handle $w={16} />
          <Label $w={92}>Middle Points:</Label>
          <Spin>1<SpinArrows><svg width="8" height="13" viewBox="0 0 8 13"><path d="M0 4.500h8l-4-4z" fill="#555" /><path d="M0 8.500h8l-4 4z" fill="#aaa" /></svg></SpinArrows></Spin>
          <ScaleBox>1:50<ScaleDrop><Caret $c="#d0ccc8" /></ScaleDrop></ScaleBox>
          <Check><svg width="9" height="10" viewBox="0 0 9 10"><path d="M1.500 5l2 3.500L7.500 1" fill="none" stroke="#000" strokeWidth="2" /></svg></Check>
          <Label $w={49}>fixed</Label>
          <FramedButton $mr={8}><svg width="16" height="16" viewBox="0 0 16 16"><path d="M.5.5h15v15H.500z" fill="#fff" stroke="#555" /><path d="M8 0h8v16H8z" fill="#000" /></svg></FramedButton>
          <FramedButton $mr={8}><svg width="16" height="16" viewBox="0 0 16 16"><path d="M.5.5h15v15H.500z" fill="#eee" stroke="#555" /><path d="M5 3.500h6v9H5z" fill={G} stroke="#555" /></svg></FramedButton>
          <EndRule />
        </ToolBar>
        <Middle>
          <SideBar>
            <SideHandle $h={13} $t={6} />
            <SideTools menu list={['line', 'circle', 'spline', 'ellipse', 'polyline', 'select', 'dim', 'modify', 'measure']} />
            <SideHandle $h={16} $t={9} />
            <SideTools list={['text', 'hatch', 'camera', 'block', 'point']} />
          </SideBar>
          <Canvas><Sheet /></Canvas>
          <Splitter />
          <Dock>
            <DockTitle $h={22} $pb={1}><span>Layer List</span><Restore /><Close /></DockTitle>
            <Filter>Filter</Filter>
            <LayerActions>
              <FramedButton><Eye on /></FramedButton><FramedButton><Eye /></FramedButton>
              <FramedButton><Lock c="#ccc" /></FramedButton><FramedButton><Lock /></FramedButton>
              <FramedButton><svg width="14" height="14" viewBox="0 0 14 14"><path d="M5 1h4v4h4v4H9v4H5V9H1V5h4z" fill={G} stroke="#6a8" /></svg></FramedButton>
              <FramedButton><svg width="14" height="14" viewBox="0 0 14 14"><path d="M1 5h12v4H1z" fill={G} stroke="#6a8" /></svg></FramedButton>
              <FramedButton><svg width="14" height="14" viewBox="0 0 14 14"><path d="M1 9l6-7 4 3-4 4-3 2z" fill={G} stroke="#385" strokeWidth=".8" /><path d="M7 6l5 6" stroke="#777" strokeWidth="2" /><path d="M1 11l4 2" stroke="#999" /></svg></FramedButton>
            </LayerActions>
            <LayerTable>
              {layers.map(([n, vis, pr, con, c], i) => (
                <LayerRow key={n}>
                  <Cell $nudge={1}><Eye on={!!vis} /></Cell><Cell $nudge={1}><Lock /></Cell><Cell><SmallPrinter on={!!pr} /></Cell><Cell><Hash on={!!con} /></Cell>
                  <Cell $bg={c} /><Name $sel={i === 0}>{n}</Name>
                </LayerRow>
              ))}
            </LayerTable>
            <Tabs $h={27} $mt={3}><Tab $w={123}>Library Browser</Tab><Tab $w={84}>Block List</Tab><Tab $on $w={84}>Layer List</Tab></Tabs>
            <HGrip />
            <DockTitle $h={22} $pt={1}><span>Pen Wizard</span><Restore /><Close /></DockTitle>
            <WizardPanel>
              <WizardTop><SmallButton>±</SmallButton><ColorCombo><div><Caret /></div></ColorCombo><SmallButton><Spectrum /></SmallButton></WizardTop>
              <WhiteBox />
            </WizardPanel>
            <Tabs $h={26} $mt={1}><Tab $on $w={95}>Pen Wizard</Tab><Tab $w={116}>Command line</Tab></Tabs>
          </Dock>
        </Middle>
        <ToolBar $h={38}>
          <Handle $first />
          <Tools list={['Ex', 'free', 'snapGrid', 'snapEnd', 'snapOn', 'snapCenter', 'snapMid', 'snapDist', 'snapInt']} on={['snapGrid', 'snapEnd', 'snapMid', 'snapInt']} />
          <Sep /><Tools list={['resH', 'resV', 'resO']} /><Sep /><Tools list={['relZero', 'lockZero']} />
          <Handle $w={16} /><Tools list={['dockL', 'dockR', 'dockT', 'dockB', 'dockF']} on={['dockR']} />
          <Handle $w={16} /><Tools list={['addCmd', 'addTool']} />
        </ToolBar>
        <Status>
          <StatusCell $w={186}>{'0 , 0\n0 < 0.00°'}</StatusCell><StatusRule />
          <StatusCell $w={331}>{'0 , 0\n0 < 0.00°'}</StatusCell>
          <svg width="22" height="24" viewBox="0 0 22 24"><path d="M1 8c5 4 4-4 8-4 2 .5 2 1 2 2" fill="none" stroke="#444" /><rect x="7.500" y="6.500" width="11" height="15" rx="3" fill="#fff" stroke="#444" /><path d="M11 6.500h4v6h-4z" fill={G} stroke="#444" strokeWidth=".8" /><path d="M8 13h11" stroke="#555" /></svg>
          <StatusCell $ml={144} $w={57}>{'Selected\n0'}</StatusCell><StatusCell $w={86}>{'Total Length\n0'}</StatusCell>
          <StatusCell $w={122}>{'Current Layer\n0'}</StatusCell><StatusCell $w={150}>{'Grid Status\n1000 / 10000'}</StatusCell>
          <Grip />
        </Status>
      </Client>
      <Pointer width="14" height="22" viewBox="0 0 14 22"><path d="M2 2v15l3.500-3 2.500 6 2.500-1-2.500-5.500h4.500z" fill="#fff" stroke="#111" strokeWidth="1.200" /></Pointer>
    </Window>
  );
}
